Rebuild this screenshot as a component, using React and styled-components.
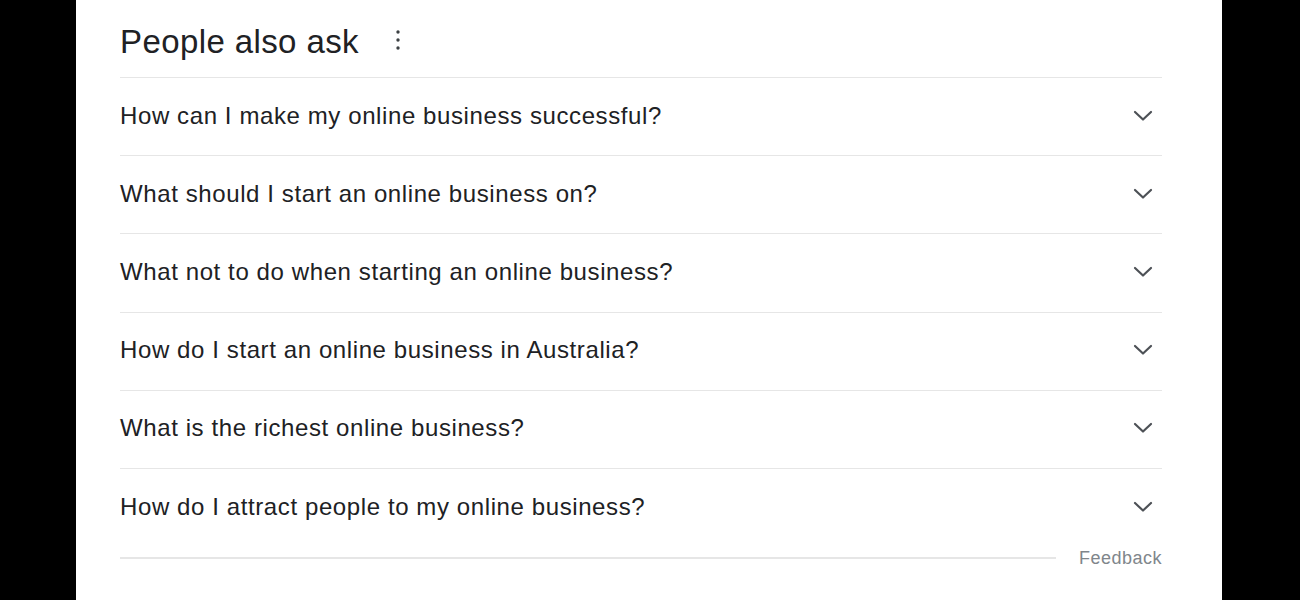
import React from 'react'
import styled, { createGlobalStyle } from 'styled-components'

const GlobalStyle = createGlobalStyle`
  html, body {
    margin: 0;
    padding: 0;
    background: #000;
  }
`

const questions = [
  'How can I make my online business successful?',
  'What should I start an online business on?',
  'What not to do when starting an online business?',
  'How do I start an online business in Australia?',
  'What is the richest online business?',
  'How do I attract people to my online business?',
]

function Chevron() {
  return (
    <svg width='20' height='12' viewBox='0 0 20 12' fill='none'>
      <polyline
        points='2,2 10,9.5 18,2'
        stroke='#4d5156'
        strokeWidth='2.2'
        strokeLinecap='round'
        strokeLinejoin='round'
      />
    </svg>
  )
}

function Kebab() {
  return (
    <svg width='6' height='20' viewBox='0 0 6 20'>
      <circle cx='3' cy='2' r='1.7' fill='#3c4043' />
      <circle cx='3' cy='10' r='1.7' fill='#3c4043' />
      <circle cx='3' cy='18' r='1.7' fill='#3c4043' />
    </svg>
  )
}

function App() {
  return (
    <>
      <GlobalStyle />
      <Panel>
        <Header>
          <Title>People also ask</Title>
          <MenuButton>
            <Kebab />
          </MenuButton>
        </Header>
        {questions.map((q) => (
          <Row key={q}>
            <Question>{q}</Question>
            <IconBox>
              <Chevron />
            </IconBox>
          </Row>
        ))}
        <Footer>
          <Rule />
          <FeedbackLink>Feedback</FeedbackLink>
        </Footer>
      </Panel>
    </>
  )
}

const Panel = styled.div`
  box-sizing: border-box;
  width: 1146px;
  height: 600px;
  margin-left: 76px;
  padding: 0 60px 0 44px;
  background: #fff;
  font-family: 'Liberation Sans', Arial, sans-serif;
  color: #202124;
`

const Header = styled.div`
  display: flex;
  align-items: center;
  height: 77px;
  padding-top: 6px;
  box-sizing: border-box;
`

const Title = styled.h2`
  margin: 0;
  font-size: 33px;
  font-weight: 400;
  letter-spacing: 0.4px;
`

const MenuButton = styled.div`
  display: flex;
  align-items: center;
  margin-left: 36px;
  margin-bottom: 4px;
`

const Row = styled.div`
  box-sizing: border-box;
  display: flex;
  align-items: center;
  justify-content: space-between;
  height: 78.2px;
  padding-bottom: 2px;
  border-top: 1.5px solid #e6e6e6;
`

const Question = styled.span`
  font-size: 24px;
  line-height: 30px;
  letter-spacing: 0.6px;
  color: #202124;
`

const IconBox = styled.div`
  display: flex;
  align-items: center;
  margin-right: 9px;
`

const Footer = styled.div`
  display: flex;
  align-items: center;
  gap: 23px;
  height: 24px;
`

const Rule = styled.div`
  flex: 1;
  height: 1.5px;
  background: #e6e6e6;
`

const FeedbackLink = styled.span`
  font-size: 18px;
  letter-spacing: 0.5px;
  color: #80868b;
`

export default App
